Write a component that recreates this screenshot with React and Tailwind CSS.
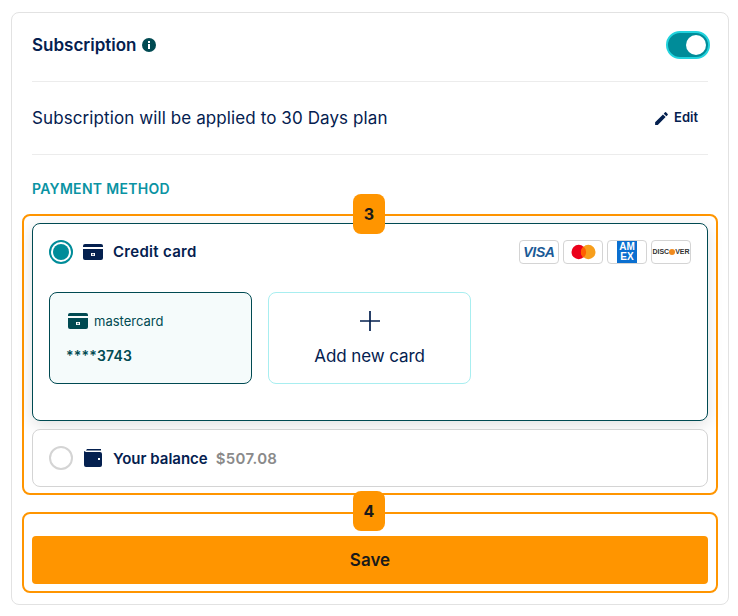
import React from 'react';

const CardIcon = ({ className }) => (
  <svg viewBox="0 0 20 16" className={className} fill="currentColor">
    <path d="M2 0h16a2 2 0 0 1 2 2v1H0V2a2 2 0 0 1 2-2z" />
    <path d="M0 5h20v9a2 2 0 0 1-2 2H2a2 2 0 0 1-2-2V5z" />
    <rect x="8" y="9" width="4" height="3" fill="#fff" />
    <rect x="9.300" y="9.800" width="1.400" height="1.400" fill="currentColor" />
  </svg>
);

const Tag = ({ n, className }) => (
  <div className={`absolute left-1/2 -translate-x-1/2 ml-[-1px] w-8 h-10 rounded-lg bg-[#ff9500] flex items-center justify-center text-[16px] font-bold text-[#1a1a1a] z-10 ${className}`}>
    {n}
  </div>
);

const Brand = ({ children }) => (
  <div className="w-10 h-6 rounded-[4px] border border-[#d4d4d4] bg-white flex items-center justify-center overflow-hidden">
    {children}
  </div>
);

export default function App() {
  return (
    <div className="w-[738px] h-[616px] bg-white pt-3 px-[11px] font-['Inter',sans-serif] text-[#04204f]">
      <div className="w-[718px] h-[593px] border border-[#e2e2e2] rounded-lg px-5">
        <div className="h-[69px] pb-1 flex items-center justify-between border-b border-[#ececec]">
          <div className="flex items-center gap-[5px]">
            <span className="text-[17px] font-semibold leading-none">Subscription</span>
            <svg viewBox="0 0 14 14" className="w-[14px] h-[14px]">
              <circle cx="7" cy="7" r="7" fill="#004a52" />
              <rect x="6" y="6" width="2" height="5" fill="#fff" />
              <rect x="6" y="3" width="2" height="2" fill="#fff" />
            </svg>
          </div>
          <div className="w-11 h-[28px] -mr-[2px] rounded-full bg-[#008c99] border-2 border-[#22d3dd] flex items-center justify-end pr-[2px]">
            <div className="w-5 h-5 rounded-full bg-white" />
          </div>
        </div>

        <div className="h-[73px] flex items-center justify-between border-b border-[#ececec]">
          <span className="text-[17px] tracking-[0.1px] mt-[2px]">Subscription will be applied to 30 Days plan</span>
          <div className="flex items-center gap-1 mr-[10px]">
            <svg viewBox="0 0 24 24" className="w-[17px] h-[17px]" fill="currentColor">
              <path d="M3 17.250V21h3.750L17.810 9.940l-3.750-3.750L3 17.250zM20.710 7.040a1 1 0 0 0 0-1.410l-2.340-2.340a1 1 0 0 0-1.410 0l-1.830 1.830 3.750 3.750 1.830-1.830z" />
            </svg>
            <span className="text-[13px] font-semibold">Edit</span>
          </div>
        </div>

        <div className="text-[14px] leading-5 font-semibold tracking-[0.3px] text-[#0a93a3] mt-[24px] mb-[15px]">PAYMENT METHOD</div>

        <div className="relative -mx-[10px] h-[281px] border-2 border-[#ff9500] rounded-lg px-2 pt-[7px]">
          <Tag n="3" className="top-[-22px]" />
          <div className="h-[198px] rounded-lg border border-[#004a52] bg-white shadow-[0_4px_16px_rgba(0,0,0,0.12)] px-4">
            <div className="h-[56px] flex items-center justify-between">
              <div className="flex items-center">
                <div className="w-6 h-6 rounded-full border-2 border-[#008c99] p-[2px]">
                  <div className="w-full h-full rounded-full bg-[#008c99]" />
                </div>
                <CardIcon className="w-5 h-4 ml-[10px] text-[#04204f]" />
                <span className="ml-[10px] text-[15px] font-semibold tracking-[0.3px]">Credit card</span>
              </div>
              <div className="flex items-center gap-1">
                <Brand>
                  <span className="text-[14px] font-black italic text-[#1a5a96] font-['Liberation_Sans',sans-serif] tracking-tight">VISA</span>
                </Brand>
                <Brand>
                  <svg viewBox="0 0 26 16" className="w-[25px] h-4">
                    <circle cx="8" cy="8" r="7.500" fill="#eb001b" />
                    <circle cx="18" cy="8" r="7.500" fill="#f79e1b" />
                    <path d="M13 2.200a7.500 7.500 0 0 1 0 11.600a7.500 7.500 0 0 1 0-11.600z" fill="#ff5f00" />
                  </svg>
                </Brand>
                <Brand>
                  <div className="w-5 h-full bg-[#0a6fd0] flex flex-col items-center justify-center text-white text-[10px] leading-[10px] font-bold font-['Liberation_Sans',sans-serif]">
                    <span>AM</span>
                    <span>EX</span>
                  </div>
                </Brand>
                <Brand>
                  <span className="text-[7px] font-bold text-[#333] font-['Liberation_Sans',sans-serif] flex items-center">
                    DISC<span className="w-[6px] h-[6px] rounded-full bg-[#f08a1d]" />VER
                  </span>
                </Brand>
              </div>
            </div>

            <div className="flex gap-4 mt-3">
              <div className="w-[203px] h-[92px] rounded-lg border border-[#004a52] bg-[#f5fbfb] pl-4 pt-5">
                <div className="flex items-center gap-[6px] pl-[2px] text-[#004a52]">
                  <CardIcon className="w-5 h-4" />
                  <span className="text-[13px] leading-4">mastercard</span>
                </div>
                <div className="mt-[17px] text-[14px] leading-5 font-semibold tracking-[0.2px] text-[#004a52]">****3743</div>
              </div>
              <div className="w-[203px] h-[92px] rounded-lg border border-[#a8eef0] bg-white flex flex-col items-center pt-[18px]">
                <svg viewBox="0 0 20 20" className="w-5 h-5" fill="none" stroke="currentColor" strokeWidth="1.700">
                  <path d="M10 0v20M0 10h20" />
                </svg>
                <span className="mt-[15px] text-[17px] leading-5 tracking-[-0.1px]">Add new card</span>
              </div>
            </div>
          </div>

          <div className="mt-2 h-[58px] rounded-lg border border-[#d4d4d4] bg-white flex items-center px-4">
            <div className="w-6 h-6 rounded-full border-2 border-[#d4d4d4]" />
            <svg viewBox="0 0 18 18" className="w-[18px] h-[18px] ml-[11px]" fill="currentColor">
              <path d="M3 0h14v1.500H2V2a3 3 0 0 1 1-2z" />
              <path fillRule="evenodd" d="M2 3h14a2 2 0 0 1 2 2v11a2 2 0 0 1-2 2H2a2 2 0 0 1-2-2V2zm12 6v2h2V9z" />
            </svg>
            <span className="ml-[11px] text-[15px] font-semibold mt-[2px]">Your balance</span>
            <span className="ml-[8px] text-[15px] font-semibold tracking-[0.3px] text-[#8a8a8a] mt-[2px]">$507.08</span>
          </div>
        </div>

        <div className="relative -mx-[10px] mt-[17px] h-[81px] border-2 border-[#ff9500] rounded-lg px-2 pt-[22px]">
          <Tag n="4" className="top-[-23px]" />
          <div className="h-12 rounded-[4px] bg-[#ff9500] flex items-center justify-center text-[17px] font-semibold text-[#1a1a1a] pt-px">
            Save
          </div>
        </div>
      </div>
    </div>
  );
}
